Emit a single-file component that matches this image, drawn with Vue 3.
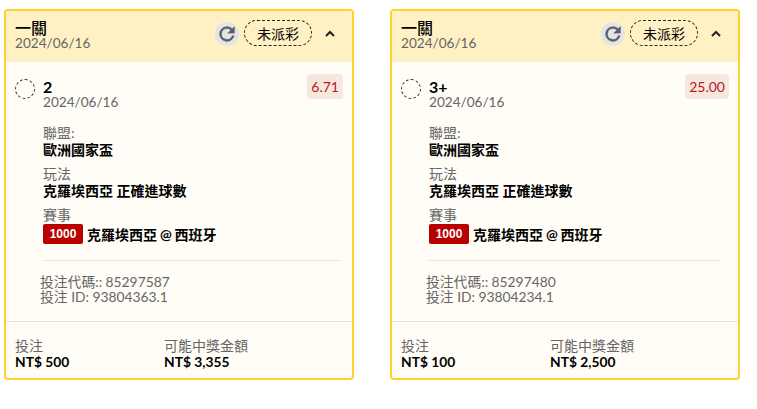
<script setup>
const cards = [
  { pick: '2', odds: '6.71', code: '85297587', id: '93804363.1', stake: 'NT$ 500', win: 'NT$ 3,355', short: false },
  { pick: '3+', odds: '25.00', code: '85297480', id: '93804234.1', stake: 'NT$ 100', win: 'NT$ 2,500', short: true },
]
</script>

<template>
  <div class="page">
    <section v-for="c in cards" :key="c.code" class="card">
      <header class="head">
        <div class="head-text">
          <div class="title">一關</div>
          <div class="muted date">2024/06/16</div>
        </div>
        <div class="head-actions">
          <span class="refresh">
            <svg width="22" height="22" viewBox="0 0 24 24"><path fill="#5a5f66" stroke="#5a5f66" stroke-width=".7" d="M17.65 6.35A7.96 7.96 0 0 0 12 4a8 8 0 1 0 7.73 10h-2.08A6 6 0 1 1 12 6c1.66 0 3.14.69 4.22 1.78L13 11h7V4l-2.35 2.35z"/></svg>
          </span>
          <span class="pill">未派彩</span>
          <svg class="chev" width="10" height="7" viewBox="0 0 10 7"><path d="M1 6l4-4 4 4" fill="none" stroke="#222" stroke-width="2"/></svg>
        </div>
      </header>
      <div class="body">
        <div class="pick">
          <span class="radio"></span>
          <div class="pick-text">
            <div class="pick-name">{{ c.pick }}</div>
            <div class="muted date">2024/06/16</div>
          </div>
          <span class="odds">{{ c.odds }}</span>
        </div>
        <div class="details">
          <div class="field">
            <div class="muted">聯盟:</div>
            <div class="value">歐洲國家盃</div>
          </div>
          <div class="field">
            <div class="muted">玩法</div>
            <div class="value">克羅埃西亞 正確進球數</div>
          </div>
          <div class="field">
            <div class="muted">賽事</div>
            <div class="value match"><span class="tag">1000</span>克羅埃西亞 @ 西班牙</div>
          </div>
          <div class="rule" :class="{ short: c.short }"></div>
        </div>
        <div class="ids muted">
          <div>投注代碼:: {{ c.code }}</div>
          <div>投注 ID: {{ c.id }}</div>
        </div>
      </div>
      <footer class="foot">
        <div class="foot-col">
          <div class="muted label">投注</div>
          <div class="amount">{{ c.stake }}</div>
        </div>
        <div class="foot-col">
          <div class="muted label">可能中獎金額</div>
          <div class="amount">{{ c.win }}</div>
        </div>
      </footer>
    </section>
  </div>
</template>

<style scoped>
.page {
  display: flex;
  gap: 36px;
  padding: 9px 0 0 4px;
  font-family: Lato, "Noto Sans CJK TC", sans-serif;
  font-size: 13.8px;
  line-height: 15px;
  color: #000;
}
.card {
  box-sizing: border-box;
  width: 350px;
  height: 371px;
  display: flex;
  flex-direction: column;
  border: 2px solid #ffd32a;
  border-radius: 4px;
  background: #fffdf6;
}
.head {
  height: 51px;
  flex: none;
  box-sizing: border-box;
  padding: 9px 17px 0 9px;
  display: flex;
  align-items: flex-start;
  justify-content: space-between;
  background: #fff1c4;
}
.head-text { margin-top: -1px; }
.title { font-size: 16px; line-height: 17px; font-weight: 500; }
.muted { color: #666; }
.date { font-size: 13.6px; }
.label { font-size: 14px; }
.head-actions { display: flex; align-items: center; }
.refresh {
  width: 24px;
  height: 24px;
  margin-top: 1px;
  border-radius: 50%;
  background: #e4e5e6;
  display: flex;
  align-items: center;
  justify-content: center;
}
.pill {
  box-sizing: border-box;
  width: 68px;
  height: 26px;
  margin-left: 5px;
  border: 1px dashed #222;
  border-radius: 13px;
  display: flex;
  align-items: center;
  justify-content: center;
  font-size: 14px;
}
.chev { margin-left: 13px; }
.body { flex: 1; padding: 13px 9px 0; }
.pick { display: flex; align-items: flex-start; }
.radio {
  box-sizing: border-box;
  width: 20px;
  height: 20px;
  margin-top: 4px;
  border: 1px dashed #222;
  border-radius: 50%;
  flex: none;
}
.pick-text { margin-left: 8px; flex: 1; padding-top: 4px; }
.pick-name { font-size: 16px; font-weight: 700; line-height: 16px; }
.odds {
  box-sizing: border-box;
  height: 25px;
  padding: 0 4px;
  margin-top: -1px;
  background: #f8e7df;
  border-radius: 4px;
  color: #b5201c;
  font-size: 14px;
  line-height: 25px;
}
.details { margin: 15px 2px 0 28px; font-size: 14px; }
.field { margin-bottom: 8px; }
.value { font-weight: 700; line-height: 17px; margin-top: 1px; }
.match { display: flex; align-items: center; margin-top: 1px; height: 22px; word-spacing: -0.5px; }
.tag {
  width: 40px;
  height: 20px;
  border-radius: 2px;
  background: #b80000;
  color: #fff;
  font-family: "Liberation Sans", sans-serif;
  font-size: 12px;
  font-weight: 700;
  line-height: 20px;
  text-align: center;
  margin-right: 4px;
}
.rule { height: 1px; background: #e5e2da; margin-top: 15px; }
.rule.short { margin-right: 8px; }
.ids { margin: 13px 0 0 25px; }
.foot {
  flex: none;
  height: 57px;
  box-sizing: border-box;
  border-top: 1px solid #e5e2da;
  padding: 16px 9px 0;
  display: flex;
}
.foot-col { width: 149px; }
.amount { font-weight: 700; margin-top: 1px; }
</style>
